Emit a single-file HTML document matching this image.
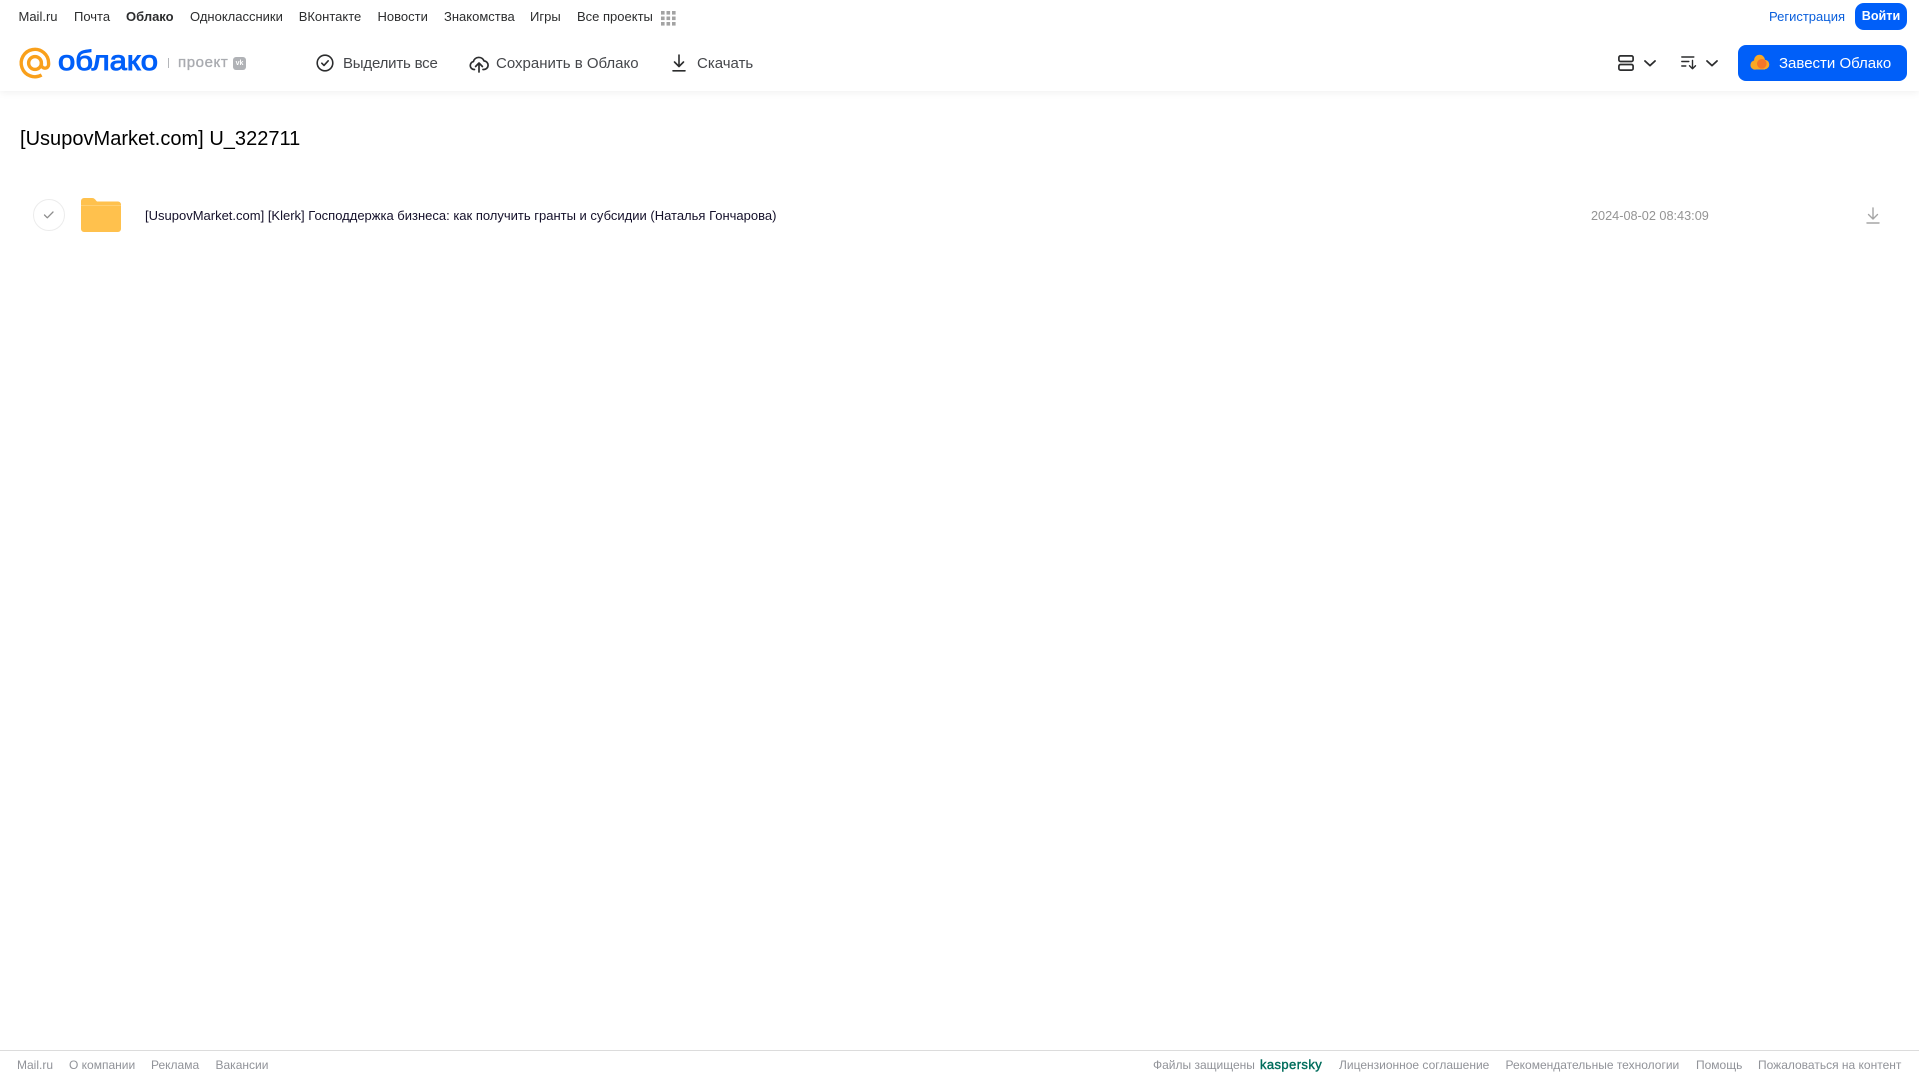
<!DOCTYPE html>
<html lang="ru">
<head>
<meta charset="utf-8">
<title>Облако</title>
<style>
html,body{margin:0;padding:0;background:#fff}
body{position:relative;width:1919px;height:1079px;overflow:hidden;font-family:"Liberation Sans",Arial,sans-serif}
.t{position:absolute;white-space:nowrap;line-height:20px;height:20px}
.n{top:7px;font-size:13px;color:#2c2d2e}
.b{top:54px;font-size:15px;color:#45474b}
.f{top:1055px;font-size:12px;color:#919399}
svg{position:absolute;overflow:visible}
#hdr{position:absolute;left:0;top:0;width:1919px;height:91px;background:#fff;box-shadow:0 1px 8px rgba(0,0,0,.07)}
</style>
</head>
<body>
<div id="hdr"></div>
<span class="t n" style="left:18.5px">Mail.ru</span>
<span class="t n" style="left:74px">Почта</span>
<span class="t n" style="left:126px;font-weight:700">Облако</span>
<span class="t n" style="left:190px">Одноклассники</span>
<span class="t n" style="left:298.7px">ВКонтакте</span>
<span class="t n" style="left:377.5px">Новости</span>
<span class="t n" style="left:444px">Знакомства</span>
<span class="t n" style="left:530px">Игры</span>
<span class="t n" style="left:577px">Все проекты</span>
<svg style="left:661px;top:11px" width="15" height="15" fill="#a3a3a3">
<rect x="0" y="0" width="3.6" height="3.6"/><rect x="5.5" y="0" width="3.6" height="3.6"/><rect x="11" y="0" width="3.6" height="3.6"/>
<rect x="0" y="5.5" width="3.6" height="3.6"/><rect x="5.5" y="5.5" width="3.6" height="3.6"/><rect x="11" y="5.5" width="3.6" height="3.6"/>
<rect x="0" y="11" width="3.6" height="3.6"/><rect x="5.5" y="11" width="3.6" height="3.6"/><rect x="11" y="11" width="3.6" height="3.6"/>
</svg>

<!-- logo -->
<svg style="left:19px;top:47px" width="32" height="32" fill="none" stroke="#f9a01b" stroke-width="3.4">
<circle cx="16" cy="16" r="6.4"/>
<path d="M22.4 16v1.6a3.6 3.6 0 0 0 7.2 0V16A13.7 13.7 0 1 0 22.6 28"/>
</svg>
<svg style="left:57px;top:45px" width="104" height="36">
<text x="1" y="25" font-family="Liberation Sans" font-size="28" fill="#005ff9" stroke="#005ff9" stroke-width="1" textLength="100" lengthAdjust="spacingAndGlyphs">облако</text>
</svg>
<div style="position:absolute;left:168px;top:58px;width:1px;height:10px;background:#b4b6ba"></div>
<span class="t" style="left:178px;top:53px;font-size:15px;color:#a9abb0;letter-spacing:.6px;-webkit-text-stroke:.35px #a9abb0">проект</span>
<div style="position:absolute;left:233px;top:57px;width:13px;height:13px;border-radius:3px;background:#b0b2b6;color:#fff;font-size:7px;font-weight:700;line-height:13px;text-align:center">vk</div>

<!-- toolbar -->
<svg style="left:316px;top:54px" width="18" height="18" fill="none" stroke="#2c2d2e" stroke-width="1.6" stroke-linecap="round" stroke-linejoin="round">
<circle cx="9" cy="9" r="7.8"/><path d="M5.8 9.2l2.2 2.2 4.2-4.6"/>
</svg>
<span class="t b" style="left:343px;letter-spacing:-.2px">Выделить все</span>
<svg style="left:468.5px;top:53.5px" width="20" height="19" fill="none" stroke="#2c2d2e" stroke-width="1.7" stroke-linecap="round" stroke-linejoin="round">
<path d="M5.5 15.5H5A4 4 0 0 1 4.4 7.6 5.6 5.6 0 0 1 15 6.9a4.3 4.3 0 0 1-.4 8.6H14"/>
<path d="M10 18V9.5M6.6 12.5L10 9l3.4 3.5"/>
</svg>
<span class="t b" style="left:496px">Сохранить в Облако</span>
<svg style="left:671px;top:54px" width="16" height="18" fill="none" stroke="#2c2d2e" stroke-width="1.6" stroke-linecap="round" stroke-linejoin="round">
<path d="M8 1v11M3.5 8L8 12.5 12.5 8M2 16.8h12"/>
</svg>
<span class="t b" style="left:697px">Скачать</span>

<!-- right -->
<span class="t n" style="left:1769px;color:#0a5fdc">Регистрация</span>
<div style="position:absolute;left:1855px;top:3px;width:52px;height:27px;border-radius:9px;background:#005ff9;color:#fff;font-size:12.6px;font-weight:700;line-height:27px;text-align:center">Войти</div>

<svg style="left:1618px;top:55px" width="16" height="16" fill="none" stroke="#2c2d2e" stroke-width="1.7">
<rect x=".9" y=".9" width="14.2" height="5.6" rx="1.6"/><rect x=".9" y="9.5" width="14.2" height="5.6" rx="1.6"/>
</svg>
<svg style="left:1644px;top:60px" width="12" height="7" fill="none" stroke="#2c2d2e" stroke-width="1.8" stroke-linecap="round" stroke-linejoin="round"><path d="M1 1l5 4.6L11 1"/></svg>
<svg style="left:1681px;top:56px" width="16" height="14" fill="none" stroke="#2c2d2e" stroke-width="1.4" stroke-linecap="round" stroke-linejoin="round">
<path d="M.8 1h12M.8 5.5h7M.8 10h4M11.5 4.5v8M8.5 9.8l3 3 3-3"/>
</svg>
<svg style="left:1706px;top:60px" width="12" height="7" fill="none" stroke="#2c2d2e" stroke-width="1.8" stroke-linecap="round" stroke-linejoin="round"><path d="M1 1l5 4.6L11 1"/></svg>

<div style="position:absolute;left:1738px;top:45px;width:169px;height:36px;border-radius:8px;background:#005ff9"></div>
<svg style="left:1750px;top:54px" width="20" height="17">
<circle cx="9.5" cy="6.2" r="5.4" fill="#f9a825"/>
<circle cx="5" cy="11" r="4.6" fill="#f9a825"/>
<circle cx="14.5" cy="10.5" r="4.8" fill="#f9a825"/>
<rect x="5" y="9" width="10" height="6.5" fill="#f9a825"/>
<circle cx="11.8" cy="9.8" r="4.8" fill="#f4762a"/>
</svg>
<span class="t b" style="left:1779px;color:#fff">Завести Облако</span>

<!-- content -->
<span class="t" style="left:20px;top:126.5px;height:24px;line-height:24px;font-size:20px;letter-spacing:.02px;color:#000">[UsupovMarket.com] U_322711</span>

<div style="position:absolute;left:33px;top:199px;width:30px;height:30px;border:1px solid #ececec;border-radius:50%"></div>
<svg style="left:43px;top:210px" width="12" height="10" fill="none" stroke="#8e8e8e" stroke-width="1.3" stroke-linecap="round" stroke-linejoin="round"><path d="M1.5 5l2.8 2.8L10 2"/></svg>
<svg style="left:81px;top:198px" width="40" height="34">
<path d="M0 3a3 3 0 0 1 3-3h8c2 0 3 1 4 2.5l1 1h21a3 3 0 0 1 3 3V31a3 3 0 0 1-3 3H3a3 3 0 0 1-3-3z" fill="#ffc14d"/>
<rect x="0" y="7" width="40" height="1" fill="#ffcf73"/>
</svg>
<span class="t" style="left:145px;top:205.5px;font-size:13px;color:#14102a">[UsupovMarket.com] [Klerk] Господдержка бизнеса: как получить гранты и субсидии (Наталья Гончарова)</span>
<span class="t" style="left:1591px;top:205.5px;font-size:12.7px;color:#949494">2024-08-02 08:43:09</span>
<svg style="left:1866px;top:207px" width="14" height="17" fill="none" stroke="#a5a5a5" stroke-width="1.4" stroke-linecap="round" stroke-linejoin="round">
<path d="M7 1v10.5M2.5 7.5L7 12l4.5-4.5M1 16h12"/>
</svg>

<!-- footer -->
<div style="position:absolute;left:0;top:1050px;width:1919px;height:1px;background:#dcdcdc"></div>
<span class="t f" style="left:17px">Mail.ru</span>
<span class="t f" style="left:69px">О компании</span>
<span class="t f" style="left:151px">Реклама</span>
<span class="t f" style="left:215.5px">Вакансии</span>
<span class="t f" style="left:1153px">Файлы защищены</span>
<span class="t f" style="left:1260px;font-size:13px;color:#006d5c;-webkit-text-stroke:.4px #006d5c;letter-spacing:.4px">kaspersky</span>
<span class="t f" style="left:1339px">Лицензионное соглашение</span>
<span class="t f" style="left:1505.5px">Рекомендательные технологии</span>
<span class="t f" style="left:1696px">Помощь</span>
<span class="t f" style="left:1758px">Пожаловаться на контент</span>
</body>
</html>
